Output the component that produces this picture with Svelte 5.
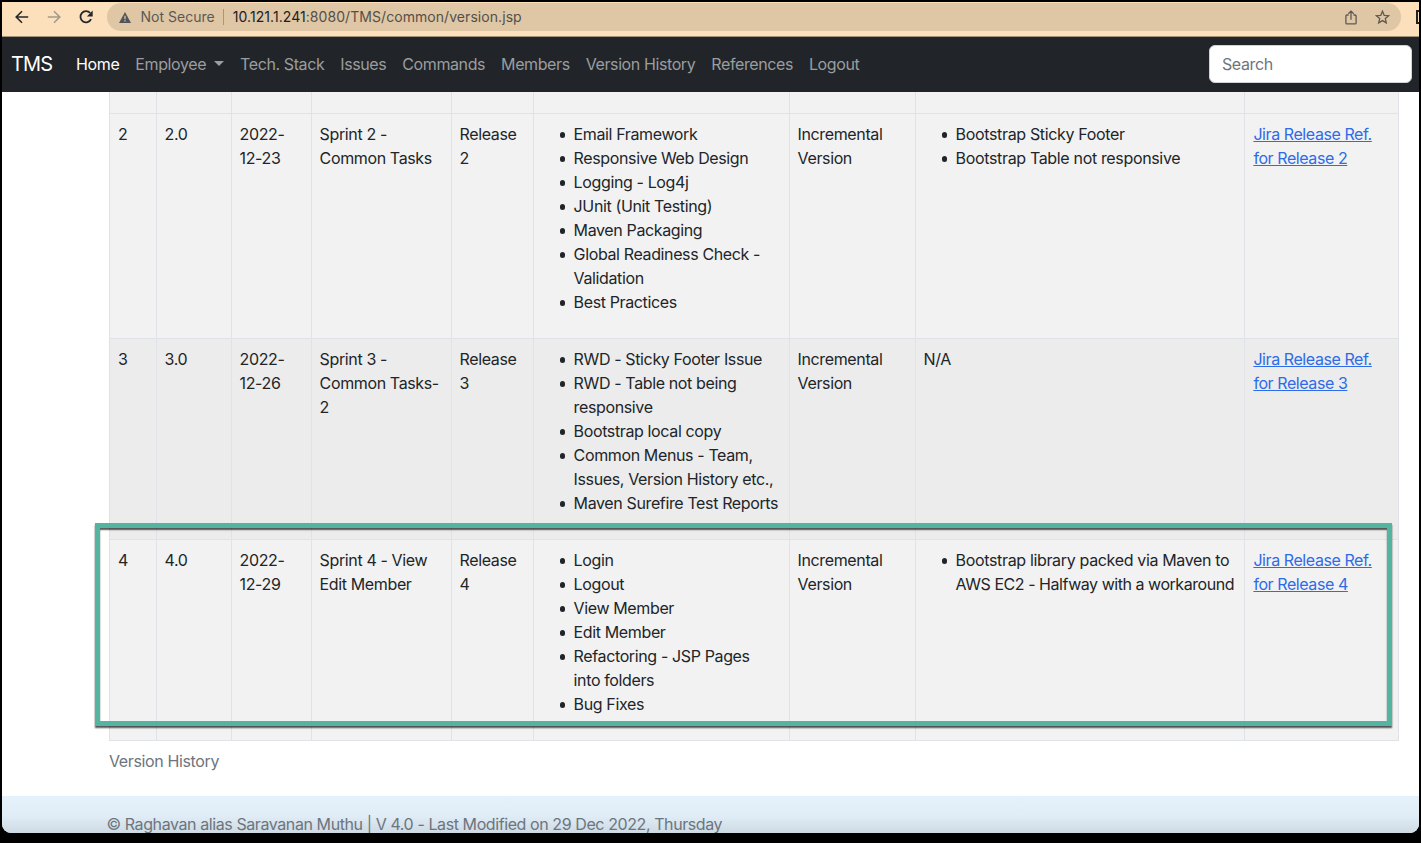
<script>
  const menu = ['Tech. Stack', 'Issues', 'Commands', 'Members', 'Version History', 'References', 'Logout'];
  const rows = [
    {
      n: 2, v: '2.0', date: ['2022-', '12-23'], name: ['Sprint 2 -', 'Common Tasks'],
      features: [['Email Framework'], ['Responsive Web Design'], ['Logging - Log4j'], ['JUnit (Unit Testing)'], ['Maven Packaging'], ['Global Readiness Check -', 'Validation'], ['Best Practices']],
      issues: [['Bootstrap Sticky Footer'], ['Bootstrap Table not responsive']]
    },
    {
      n: 3, v: '3.0', date: ['2022-', '12-26'], name: ['Sprint 3 -', 'Common Tasks-', '2'],
      features: [['RWD - Sticky Footer Issue'], ['RWD - Table not being', 'responsive'], ['Bootstrap local copy'], ['Common Menus - Team,', 'Issues, Version History etc.,'], ['Maven Surefire Test Reports']],
      issues: null
    },
    {
      n: 4, v: '4.0', date: ['2022-', '12-29'], name: ['Sprint 4 - View', 'Edit Member'],
      features: [['Login'], ['Logout'], ['View Member'], ['Edit Member'], ['Refactoring - JSP Pages', 'into folders'], ['Bug Fixes']],
      issues: [['Bootstrap library packed via Maven to', 'AWS EC2 - Halfway with a workaround']]
    }
  ];
</script>

{#snippet lines(list)}
  {#each list as line}<span class="line">{line}</span>{/each}
{/snippet}

{#snippet bullets(list)}
  <ul>
    {#each list as item}<li>{@render lines(item)}</li>{/each}
  </ul>
{/snippet}

<div class="screen">
  <div class="window">
    <header class="chrome">
      <svg class="back" width="14" height="14" viewBox="0 0 14 14" fill="none" stroke="#25282b" stroke-width="1.6"><path d="M13.2 7H1.4M7 1.2 1.2 7 7 12.8" /></svg>
      <svg class="fwd" width="14" height="14" viewBox="0 0 14 14" fill="none" stroke="#a49a88" stroke-width="1.6"><path d="M.8 7h11.8M7 1.2 12.8 7 7 12.8" /></svg>
      <svg class="reload" width="15" height="14" viewBox="0 0 15 14"><path d="M12.1 9.2A5.6 5.6 0 1 1 11.2 3" fill="none" stroke="#25282b" stroke-width="1.8" /><path d="M13.7.4v6H7.9z" fill="#25282b" /></svg>
      <div class="omnibox">
        <svg width="12" height="11" viewBox="0 0 12 11"><path d="M6 0 12 11H0z" fill="#51545a" /><path d="M6 3.8v3.4M6 8.2v1.4" stroke="#dfc6a5" stroke-width="1.3" /></svg>
        <span class="secure">Not Secure</span>
        <i></i>
        <span class="url"><b>10.121.1.241</b>:8080/TMS/common/version.jsp</span>
        <svg class="share" width="12" height="15" viewBox="0 0 12 15" fill="none" stroke="#5d5a55" stroke-width="1.3"><path d="M3.6 5H1.9a1 1 0 0 0-1 1v6.9a1 1 0 0 0 1 1h8.2a1 1 0 0 0 1-1V6a1 1 0 0 0-1-1H8.4M6 9.8V1.2M3.3 3.8 6 1.1l2.7 2.7" /></svg>
        <svg class="star" width="15" height="14" viewBox="0 0 15 14" fill="none" stroke="#5d5a55" stroke-width="1.3"><path d="m7.5 1.2 1.7 4.1 4.5.4-3.4 2.9 1 4.3-3.8-2.3-3.8 2.3 1-4.3L1.3 5.7l4.5-.4z" /></svg>
      </div>
      <span class="panel"></span>
    </header>

    <nav>
      <span class="brand">TMS</span>
      <span class="item active">Home</span>
      <span class="item">Employee<em></em></span>
      {#each menu as m}<span class="item">{m}</span>{/each}
      <input placeholder="Search" />
    </nav>

    <main>
      <div class="grid stub">{#each Array(9) as _}<div></div>{/each}</div>
      {#each rows as r, i}
        <div class="grid" class:dark={i === 1} class:tall={i === 0}>
          <div>{r.n}</div>
          <div>{r.v}</div>
          <div>{@render lines(r.date)}</div>
          <div>{@render lines(r.name)}</div>
          <div>{@render lines(['Release', r.n])}</div>
          <div>{@render bullets(r.features)}</div>
          <div>{@render lines(['Incremental', 'Version'])}</div>
          <div class="issues">{#if r.issues}{@render bullets(r.issues)}{:else}N/A{/if}</div>
          <div><a href="#release-{r.n}">Jira Release Ref.<br />for Release {r.n}</a></div>
        </div>
      {/each}
      <p class="caption">Version History</p>
    </main>

    <footer>© Raghavan alias Saravanan Muthu | V 4.0 - Last Modified on 29 Dec 2022, Thursday</footer>
  </div>
  <div class="highlight"></div>
</div>

<style>
  :global(body) { background: #000; overflow: hidden; }
  .screen {
    width: 1421px; height: 843px; box-sizing: border-box; padding: 2px 2px 0;
    position: relative; overflow: hidden; background: #000;
    font: 16px/24px Inter, sans-serif; letter-spacing: -0.37px; color: #212529;
  }
  .window {
    height: 831px; background: #fff; overflow: hidden; border-radius: 0 0 9px 9px;
    display: flex; flex-direction: column;
  }
  .chrome {
    height: 35px; flex: none; box-sizing: border-box; background: #fcdfbb; border-bottom: 1px solid #a39178;
    display: flex; align-items: center; padding: 0 0 4px 12.5px; overflow: hidden;
  }
  .chrome svg { flex: none; }
  .fwd { margin-left: 18px; }
  .reload { margin-left: 18px; }
  .omnibox {
    margin-left: 13px; width: 1294px; flex: none; height: 28px; box-sizing: border-box; border-radius: 14px; background: #dfc6a5;
    display: flex; align-items: center; padding: 0 11px 0 12px; font-size: 14px; line-height: 28px; color: #54504a;
    letter-spacing: 0.02px;
  }
  .secure { margin-left: 10px; color: #5b5955; }
  .omnibox i { width: 1px; height: 16px; background: #a69784; margin: 0 9px 0 8px; }
  .url { letter-spacing: 0.06px; }
  .url b { font-weight: 400; color: #202124; }
  .share { margin-left: auto; }
  .star { margin-left: 18px; }
  .panel { width: 12px; height: 10px; border: 2px solid #202124; margin-left: 15px; flex: none; }

  nav {
    height: 55px; flex: none; box-sizing: border-box; background: #212529; display: flex; align-items: center;
    padding: 0 7px 1px 9px; color: #9b9d9f; letter-spacing: -0.4px;
  }
  .brand { font-size: 20px; color: #fff; margin-right: 16px; letter-spacing: -0.9px; }
  .item { padding: 0 8px; white-space: nowrap; }
  .active { color: #fff; }
  em {
    display: inline-block; margin-left: 8px; vertical-align: 4px;
    border: 5.2px solid transparent; border-top-color: currentColor; border-bottom: 0;
  }
  input {
    margin-left: auto; width: 203px; height: 38px; box-sizing: border-box; border: 1px solid #ced4da;
    border-radius: 6px; padding: 0 12px; font: inherit; letter-spacing: inherit; background: #fff;
  }
  input::placeholder { color: #6c757d; opacity: 1; }

  main { flex: none; height: 704px; padding-left: 107px; }
  .grid {
    display: grid; grid-template-columns: 46.6px 75px 80px 140px 82px 256px 126px 329.8px 1fr;
    width: 1290px; height: 201px; box-sizing: border-box; background: #f2f2f2;
    border-right: 1px solid #dfe2e6; border-bottom: 1px solid #dfe2e6;
  }
  .grid > div { border-left: 1px solid #dfe2e6; padding: 8px; white-space: nowrap; min-width: 0; }
  .tall { height: 225px; }
  .dark { background: #ececec; }
  .stub { height: 22px; }
  .stub > div { padding: 0; }
  .line { display: block; }
  ul { margin: 0; padding-left: 32px; list-style: none; }
  li::before {
    content: ''; float: left; width: 5.6px; height: 5.6px; border-radius: 50%;
    background: #212529; margin: 10px 0 0 -14px;
  }
  .issues .line { letter-spacing: -0.34px; }
  .issues .line + .line { letter-spacing: -0.46px; }
  a { color: #2d6be9; text-decoration: underline; letter-spacing: -0.42px; }
  .caption { margin: 0; padding-top: 8px; color: #6c757d; }

  footer {
    flex: 1; background: linear-gradient(#e5f1fb, #e0ecf6 50%, #cbd7e0); color: #6c757d;
    padding: 16px 0 0 104.5px; white-space: nowrap; letter-spacing: -0.41px;
  }
  .highlight {
    position: absolute; left: 95px; top: 523px; width: 1287px; height: 193px;
    border: 5px solid #53b59f;
    box-shadow: 0 2px 1.5px rgba(0, 0, 0, .65), inset 0 2px 1.5px rgba(0, 0, 0, .65);
  }
</style>
